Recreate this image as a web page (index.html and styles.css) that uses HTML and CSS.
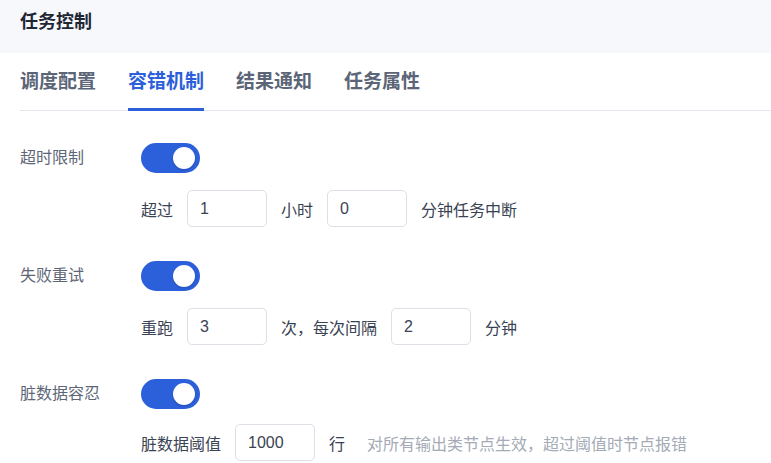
FILE: index.html
```html
<!DOCTYPE html>
<html lang="zh-CN">
<head>
  <meta charset="UTF-8" />
  <meta name="viewport" content="width=device-width, initial-scale=1.0"/>
  <title>任务控制</title>
  <link rel="stylesheet" href="styles.css">
</head>
<body>
  <div class="header">任务控制</div>

  <div class="tabs">
    <div class="tab">调度配置</div>
    <div class="tab active">容错机制</div>
    <div class="tab">结果通知</div>
    <div class="tab">任务属性</div>
  </div>

  <div class="content">
    <div class="section">
      <div class="row">
        <span class="label">超时限制</span>
        <span class="switch on"><span class="knob"></span></span>
      </div>
      <div class="sub">
        <span>超过</span>
        <input class="num" type="text" value="1">
        <span>小时</span>
        <input class="num" type="text" value="0">
        <span>分钟任务中断</span>
      </div>
    </div>

    <div class="section">
      <div class="row">
        <span class="label">失败重试</span>
        <span class="switch on"><span class="knob"></span></span>
      </div>
      <div class="sub">
        <span>重跑</span>
        <input class="num" type="text" value="3">
        <span>次，每次间隔</span>
        <input class="num" type="text" value="2">
        <span>分钟</span>
      </div>
    </div>

    <div class="section">
      <div class="row">
        <span class="label">脏数据容忍</span>
        <span class="switch on"><span class="knob"></span></span>
      </div>
      <div class="sub last">
        <span>脏数据阈值</span>
        <input class="num" type="text" value="1000">
        <span>行</span>
        <span class="hint">对所有输出类节点生效，超过阈值时节点报错</span>
      </div>
    </div>
  </div>
</body>
</html>
```

FILE: styles.css
```css
* {
  box-sizing: border-box;
}
body {
  margin: 0;
  background-color: #fff;
  color: #3a4353;
  font-family: "Liberation Sans", "Noto Sans CJK SC", sans-serif;
  font-size: 16px;
  overflow: hidden;
}
.header {
  height: 53px;
  padding: 9px 20px 0;
  line-height: 26px;
  background-color: #f7f8fb;
  color: #1f2735;
  font-size: 18px;
  font-weight: 700;
}
.tabs {
  display: flex;
  gap: 32px;
  margin-left: 20px;
  border-bottom: 1px solid #e4e7ee;
}
.tab {
  padding: 15px 0 12px;
  margin-bottom: -1px;
  line-height: 28px;
  font-size: 19px;
  font-weight: 700;
  color: #5b6577;
  border-bottom: 3px solid transparent;
}
.tab.active {
  color: #2c5fda;
  border-bottom-color: #2c5fda;
}
.content {
  padding: 32px 20px 0;
}
.section {
  margin-bottom: 34px;
}
.section:last-child {
  margin-bottom: 0;
}
.row {
  display: flex;
  align-items: center;
}
.label {
  width: 121px;
  color: #5d6676;
  line-height: 30px;
}
.switch {
  position: relative;
  width: 59px;
  height: 30px;
  border-radius: 15px;
  background-color: #d5d9e0;
}
.switch.on {
  background-color: #2c5fda;
}
.knob {
  position: absolute;
  top: 4px;
  right: 5px;
  width: 22px;
  height: 22px;
  border-radius: 50%;
  background-color: #fff;
  box-shadow: 0 1px 2px rgba(0, 0, 0, 0.2);
}
.sub {
  display: flex;
  align-items: center;
  gap: 14px;
  margin-top: 17px;
  padding-left: 121px;
  color: #3a4353;
}
.sub.last {
  margin-top: 15px;
}
.num {
  width: 80px;
  height: 37px;
  padding: 0 12px;
  border: 1px solid #dcdfe6;
  border-radius: 5px;
  font-family: inherit;
  font-size: 16px;
  color: #3a4353;
  outline: none;
}
.hint {
  margin-left: 8px;
  color: #a4aab6;
}
```
